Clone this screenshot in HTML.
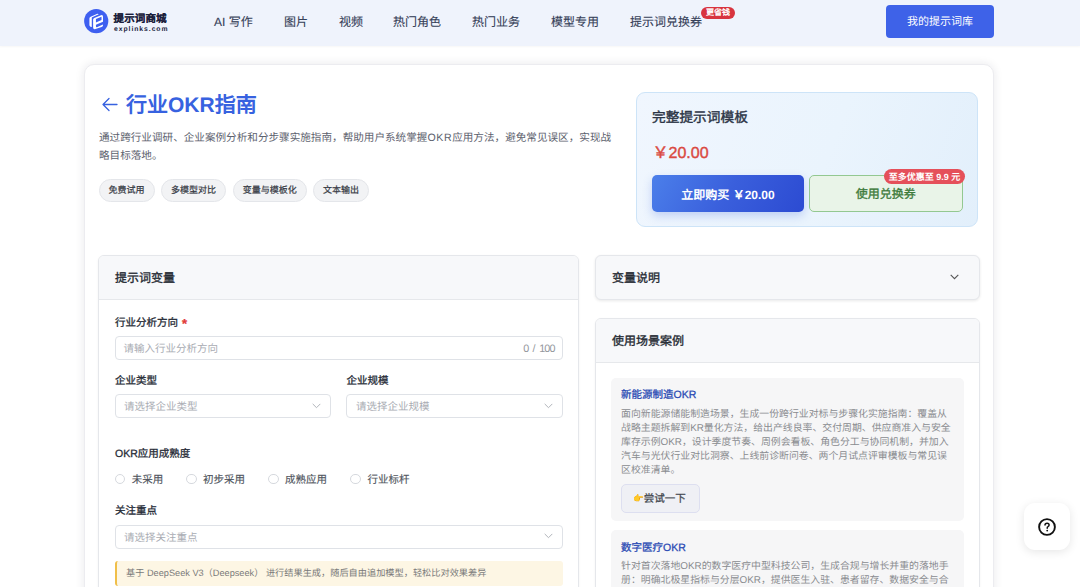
<!DOCTYPE html>
<html lang="zh-CN"><head><meta charset="utf-8">
<style>
*{box-sizing:border-box;margin:0;padding:0}
html,body{width:1080px;height:587px;overflow:hidden;background:#fff;text-rendering:geometricPrecision;font-family:"Liberation Sans",sans-serif;color:#333}
.a{position:absolute;white-space:nowrap}
.nav{position:absolute;left:0;top:0;width:1080px;height:46px;background:#eff3fc;box-shadow:0 1px 2px rgba(0,0,0,0.035)}
.brand{left:113.5px;top:10.7px;font-size:10.5px;font-weight:900;-webkit-text-stroke-width:0.1px;color:#1b1e3c;line-height:16px;letter-spacing:0.15px}
.brand2{left:114px;top:24.8px;font-size:6.8px;font-weight:bold;color:#1b1e3c;letter-spacing:0.95px;line-height:9px}
.ni{top:13px;font-size:12px;font-weight:400;-webkit-text-stroke-width:0.12px;color:#364058;line-height:18px}
.badge{left:701px;top:7px;width:34px;height:11.5px;background:#d8343f;border-radius:6px;color:#fff;font-size:8px;font-weight:400;-webkit-text-stroke-width:0.35px;line-height:12px;text-align:center}
.mybtn{left:886px;top:5px;width:108px;height:32.5px;background:#3e62e8;border-radius:4px;color:#fff;font-size:11px;line-height:34px;text-align:center}
.card{position:absolute;left:84px;top:64px;width:910px;height:620px;background:#fff;border-radius:10px;border:1px solid #ececf0;box-shadow:0 0 10px rgba(30,30,60,0.10)}
.title{left:126px;top:93px;font-size:21px;font-weight:bold;color:#3762e0;line-height:26px}
.desc{position:absolute;left:99px;top:130.3px;width:514px;font-size:10.6px;color:#5d626e;line-height:17.5px}
.tag{top:179px;height:22.5px;border-radius:12px;background:#f2f3f5;border:1px solid #e4e6ea;font-size:9px;font-weight:400;-webkit-text-stroke-width:0.22px;color:#363a44;line-height:21.5px;text-align:center}
.price{position:absolute;left:636px;top:92px;width:342px;height:135px;border-radius:9px;border:1px solid #cde4f8;background:linear-gradient(110deg,#f0f6fe 0%,#eaf4fd 55%,#e2effb 100%)}
.ptitle{left:652px;top:108px;font-size:13.7px;font-weight:400;-webkit-text-stroke-width:0.4px;color:#2b3445;line-height:20px}
.pprice{left:652.5px;top:142.6px;font-size:16px;font-weight:400;-webkit-text-stroke-width:0.4px;color:#da4a42;line-height:22px}
.buy{left:652px;top:175px;width:152px;height:37px;border-radius:5px;background:linear-gradient(120deg,#4b7fea 0%,#3a5fdc 50%,#2c4bd2 100%);box-shadow:0 4px 10px rgba(60,100,220,0.25);color:#fff;font-size:12px;font-weight:bold;line-height:40px;text-align:center}
.coupon{left:809px;top:175px;width:153.5px;height:37px;border-radius:5px;background:#e9f4e8;border:1px solid #93c891;color:#3d7b3b;font-size:12px;font-weight:400;-webkit-text-stroke-width:0.35px;line-height:37px;text-align:center}
.cbadge{left:884px;top:168.5px;width:81px;height:15.5px;border-radius:8px;background:#e5505a;color:#fff;font-size:9px;font-weight:bold;line-height:16px;text-align:center}
.panel{position:absolute;background:#fff;border:1px solid #e5e7eb;border-radius:6px;box-shadow:0 1px 3px rgba(0,0,0,0.05);overflow:hidden}
.phead{height:44px;background:#f7f8fa;border-bottom:1px solid #e6e8eb}
.pht{font-size:12px;font-weight:400;-webkit-text-stroke-width:0.35px;color:#262b33;line-height:18px}
.lbl{font-size:10.5px;font-weight:400;-webkit-text-stroke-width:0.3px;color:#262b36;line-height:14px}
.inp{position:absolute;height:24px;border:1px solid #dfe2e7;border-radius:4px;background:#fff}
.ph{font-size:10.5px;color:#a9acb3;line-height:14px}
.chev{position:absolute;width:9px;height:6px}.chev svg{display:block}
.radio{position:absolute;width:10.5px;height:10.5px;border-radius:50%;border:1px solid #d6d9de;background:#fff}
.rl{font-size:10.5px;font-weight:400;-webkit-text-stroke-width:0.15px;color:#50555e;line-height:14px}
.notice{position:absolute;left:114.5px;top:561px;width:448px;height:24.5px;background:#fdf6e4;border-left:2px solid #f0bf49;border-radius:3px}
.nt{left:126px;top:566px;font-size:9.2px;color:#7a7a7a;line-height:14px}
.case{position:absolute;background:#f6f6f7;border-radius:5px}
.ct{font-size:10.5px;font-weight:400;-webkit-text-stroke-width:0.3px;color:#2b4bb4;line-height:14px}
.cb{position:absolute;font-size:9.9px;color:#8a8c90;line-height:14.15px;white-space:normal}
.try{left:620.5px;top:483.8px;width:79px;height:28.8px;border-radius:5px;background:#eff0f5;border:1px solid #dddff0;font-size:10.5px;font-weight:400;-webkit-text-stroke-width:0.25px;color:#42464e;line-height:27.2px;text-align:center;padding-right:1px}
.help{position:absolute;left:1024px;top:503px;width:46px;height:47px;border-radius:11px;background:#fff;box-shadow:0 2px 10px rgba(0,0,0,0.10)}
</style></head>
<body>
<div class="nav"></div>
<svg class="a" style="left:82px;top:7px" width="29" height="29" viewBox="0 0 587 587">
  <circle cx="288" cy="285" r="245" fill="#3e5ff0"/>
  <path d="M150 230 Q150 205 175 195 L300 140 Q325 130 340 148 L205 208 Q198 212 198 225 L198 400 Q180 410 165 395 Q150 385 150 365 Z" fill="#fff"/>
  <path d="M225 255 Q225 232 248 222 L385 165 Q425 150 425 195 L425 300 L282 360 L282 385 Q282 418 312 405 L425 355 L425 372 Q420 395 398 405 L272 447 Q225 462 225 415 Z M282 242 L282 312 L395 265 L395 198 Z" fill="#fff" fill-rule="evenodd"/>
</svg>
<div class="a brand">提示词商城</div>
<div class="a brand2">explinks.com</div>
<div class="a ni" style="left:214px">AI 写作</div>
<div class="a ni" style="left:284px">图片</div>
<div class="a ni" style="left:339px">视频</div>
<div class="a ni" style="left:393px">热门角色</div>
<div class="a ni" style="left:472px">热门业务</div>
<div class="a ni" style="left:551px">模型专用</div>
<div class="a ni" style="left:630px">提示词兑换券</div>
<div class="a badge">更省钱</div>
<div class="a mybtn">我的提示词库</div>

<div class="card"></div>
<svg class="a" style="left:101px;top:97px" width="17" height="15" viewBox="0 0 17 15">
  <path d="M8 1.5 L2 7.5 L8 13.5 M2 7.5 L16 7.5" fill="none" stroke="#3762e0" stroke-width="1.3" stroke-linecap="round" stroke-linejoin="round"/>
</svg>
<div class="a title">行业OKR指南</div>
<div class="desc">通过跨行业调研、企业案例分析和分步骤实施指南，帮助用户系统掌握<span style="letter-spacing:0.6px">OKR</span>应用方法，避免常见误区，实现战略目标落地。</div>
<div class="a tag" style="left:98.5px;width:56px">免费试用</div>
<div class="a tag" style="left:161px;width:65px">多模型对比</div>
<div class="a tag" style="left:232.5px;width:74.5px">变量与模板化</div>
<div class="a tag" style="left:313px;width:56px">文本输出</div>

<div class="price"></div>
<div class="a ptitle">完整提示词模板</div>
<div class="a pprice">￥20.00</div>
<div class="a buy">立即购买 ￥20.00</div>
<div class="a coupon">使用兑换券</div>
<div class="a cbadge">至多优惠至 9.9 元</div>

<!-- left panel -->
<div class="panel" style="left:98px;top:255px;width:481px;height:360px"><div class="phead"></div></div>
<div class="a pht" style="left:115px;top:269.0px">提示词变量</div>
<div class="a lbl" style="left:115px;top:316.0px">行业分析方向<span style="position:absolute;left:67px;top:1px;font-size:13px;font-weight:bold;color:#e23b39">*</span></div>
<div class="inp" style="left:114.5px;top:335.5px;width:448px"></div>
<div class="a ph" style="left:123.5px;top:342.0px">请输入行业分析方向</div>
<div class="a" style="left:523.3px;top:342px;font-size:10.8px;color:#94979d;line-height:14px">0</div><div class="a" style="left:532.6px;top:342px;font-size:10.8px;color:#94979d;line-height:14px">/</div><div class="a" style="left:539.2px;top:342px;font-size:10.8px;color:#94979d;line-height:14px;letter-spacing:-0.9px">100</div>

<div class="a lbl" style="left:115px;top:374.0px">企业类型</div>
<div class="inp" style="left:114.5px;top:394px;width:216px"></div>
<div class="a ph" style="left:124px;top:400.0px">请选择企业类型</div>
<div class="chev" style="left:312.2px;top:402.8px"><svg width="9" height="6" viewBox="0 0 9 6"><path d="M0.7 0.9 L4.5 4.7 L8.3 0.9" fill="none" stroke="#a8abb2" stroke-width="0.9"/></svg></div>
<div class="a lbl" style="left:346.5px;top:374.0px">企业规模</div>
<div class="inp" style="left:346px;top:394px;width:216.5px"></div>
<div class="a ph" style="left:356px;top:400.0px">请选择企业规模</div>
<div class="chev" style="left:543.8px;top:402.8px"><svg width="9" height="6" viewBox="0 0 9 6"><path d="M0.7 0.9 L4.5 4.7 L8.3 0.9" fill="none" stroke="#a8abb2" stroke-width="0.9"/></svg></div>

<div class="a lbl" style="left:115px;top:447.0px">OKR应用成熟度</div>
<div class="radio" style="left:114.8px;top:473.8px"></div>
<div class="a rl" style="left:131.8px;top:473.0px">未采用</div>
<div class="radio" style="left:186.2px;top:473.8px"></div>
<div class="a rl" style="left:203px;top:473.0px">初步采用</div>
<div class="radio" style="left:268px;top:473.8px"></div>
<div class="a rl" style="left:285px;top:473.0px">成熟应用</div>
<div class="radio" style="left:350.4px;top:473.8px"></div>
<div class="a rl" style="left:367.4px;top:473.0px">行业标杆</div>

<div class="a lbl" style="left:115px;top:504.0px">关注重点</div>
<div class="inp" style="left:114.5px;top:524.5px;width:448px"></div>
<div class="a ph" style="left:124px;top:531.0px">请选择关注重点</div>
<div class="chev" style="left:543.8px;top:533px"><svg width="9" height="6" viewBox="0 0 9 6"><path d="M0.7 0.9 L4.5 4.7 L8.3 0.9" fill="none" stroke="#a8abb2" stroke-width="0.9"/></svg></div>
<div class="notice"></div>
<div class="a nt">基于 DeepSeek V3（Deepseek） 进行结果生成，随后自由追加模型，轻松比对效果差异</div>

<!-- right panels -->
<div class="panel" style="left:595px;top:255px;width:385px;height:45px;background:#f7f8fa;box-shadow:0 1px 3px rgba(0,0,0,0.09)"></div>
<div class="a pht" style="left:612px;top:269.0px">变量说明</div>
<div class="chev" style="left:950.2px;top:273.5px"><svg width="9" height="6" viewBox="0 0 9 6"><path d="M0.7 0.9 L4.5 4.7 L8.3 0.9" fill="none" stroke="#555" stroke-width="1.1"/></svg></div>

<div class="panel" style="left:595px;top:318px;width:385px;height:320px"><div class="phead"></div></div>
<div class="a pht" style="left:612px;top:332.0px">使用场景案例</div>

<div class="case" style="left:611px;top:378px;width:353px;height:143px"></div>
<div class="a ct" style="left:621px;top:388.0px">新能源制造OKR</div>
<div class="cb" style="left:621px;top:407.5px;width:333px">面向新能源储能制造场景，生成一份跨行业对标与步骤化实施指南：覆盖从战略主题拆解到KR量化方法，给出产线良率、交付周期、供应商准入与安全库存示例OKR，设计季度节奏、周例会看板、角色分工与协同机制，并加入汽车与光伏行业对比洞察、上线前诊断问卷、两个月试点评审模板与常见误区校准清单。</div>
<div class="a try"><span style="font-size:8.5px;vertical-align:0.5px;-webkit-text-stroke-width:0">👉</span>尝试一下</div>

<div class="case" style="left:611px;top:529.5px;width:353px;height:143px"></div>
<div class="a ct" style="left:621px;top:541.0px">数字医疗OKR</div>
<div class="cb" style="left:621px;top:559.5px;width:333px">针对首次落地OKR的数字医疗中型科技公司，生成合规与增长并重的落地手册：明确北极星指标与分层OKR，提供医生入驻、患者留存、数据安全与合规审计示例。</div>

<div class="help"></div>
<svg class="a" style="left:1038.4px;top:518px" width="18" height="18" viewBox="0 0 18 18">
  <circle cx="9" cy="9" r="7.9" fill="none" stroke="#111" stroke-width="1.9"/>
  <path d="M7 7.1 Q7 5.2 9.1 5.2 Q11.1 5.2 11.1 7 Q11.1 8.1 10 8.7 Q9.2 9.1 9.2 10.2" fill="none" stroke="#111" stroke-width="1.5" stroke-linecap="round"/>
  <circle cx="9.2" cy="12.6" r="0.9" fill="#111"/>
</svg>
</body></html>
